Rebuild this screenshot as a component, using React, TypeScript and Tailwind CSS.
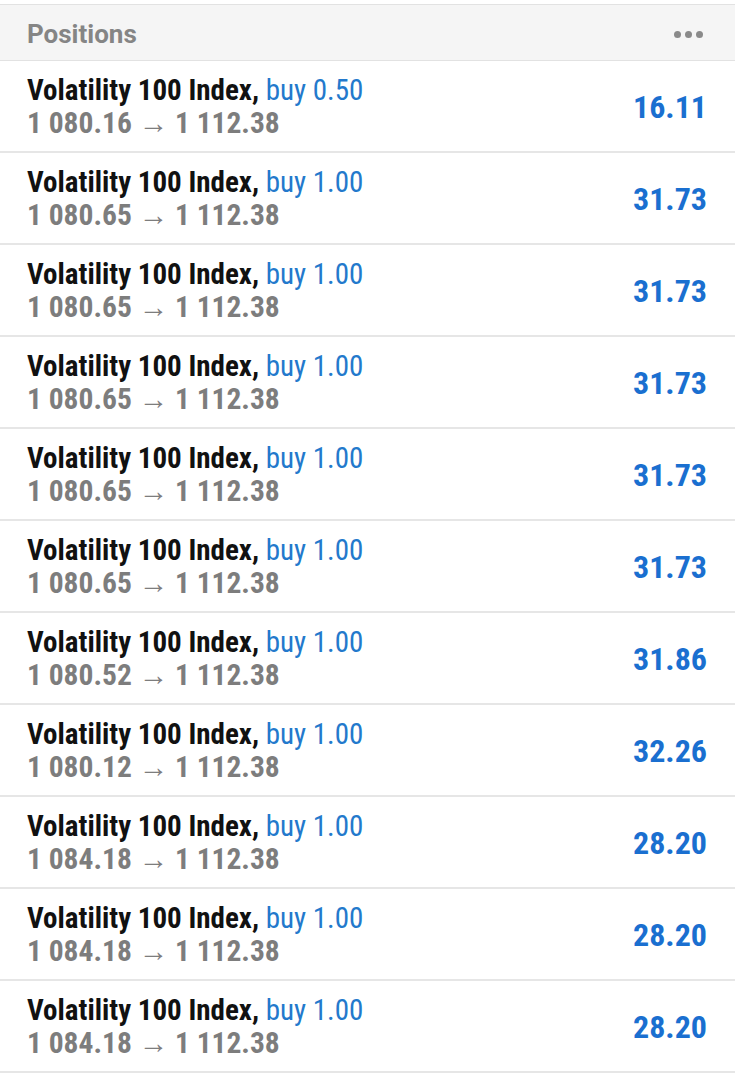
const positions = [
  { lot: '0.50', open: '1 080.16', profit: '16.11' },
  { lot: '1.00', open: '1 080.65', profit: '31.73' },
  { lot: '1.00', open: '1 080.65', profit: '31.73' },
  { lot: '1.00', open: '1 080.65', profit: '31.73' },
  { lot: '1.00', open: '1 080.65', profit: '31.73' },
  { lot: '1.00', open: '1 080.65', profit: '31.73' },
  { lot: '1.00', open: '1 080.52', profit: '31.86' },
  { lot: '1.00', open: '1 080.12', profit: '32.26' },
  { lot: '1.00', open: '1 084.18', profit: '28.20' },
  { lot: '1.00', open: '1 084.18', profit: '28.20' },
  { lot: '1.00', open: '1 084.18', profit: '28.20' },
];

export default function App() {
  return (
    <div className="min-h-[1080px] w-[735px] bg-white pt-[4px] font-['Roboto_Condensed',Roboto,sans-serif]">
      {/* Header */}
      <div className="flex h-[57px] items-center justify-between border-y border-[#e2e2e2] bg-[#f5f5f5] pl-[27px] pr-[32px] pt-[3px]">
        <span className="font-['Roboto',sans-serif] text-[26px] font-bold text-[#858585]">Positions</span>
        <div className="flex gap-[4px]">
          <span className="h-[7px] w-[7px] rounded-full bg-[#8a8a8a]"></span>
          <span className="h-[7px] w-[7px] rounded-full bg-[#8a8a8a]"></span>
          <span className="h-[7px] w-[7px] rounded-full bg-[#8a8a8a]"></span>
        </div>
      </div>

      {/* Rows */}
      {positions.map((p, i) => (
        <div
          key={i}
          className="flex h-[92px] items-center justify-between border-b-2 border-[#e6e6e6] pl-[27px] pr-[28px] pt-[2px]"
        >
          <div className="flex flex-col">
            <div className="text-[29px] leading-[33px]">
              <span className="font-bold text-[#111111]">Volatility 100 Index, </span>
              <span className="text-[#2379cc]">buy {p.lot}</span>
            </div>
            <div className="text-[29.5px] font-bold leading-[33px] text-[#7d7d7d]">
              {p.open} <span className="font-normal">→</span> 1 112.38
            </div>
          </div>
          <div className="text-[32px] font-bold text-[#1a6fd0]">{p.profit}</div>
        </div>
      ))}
    </div>
  );
}
